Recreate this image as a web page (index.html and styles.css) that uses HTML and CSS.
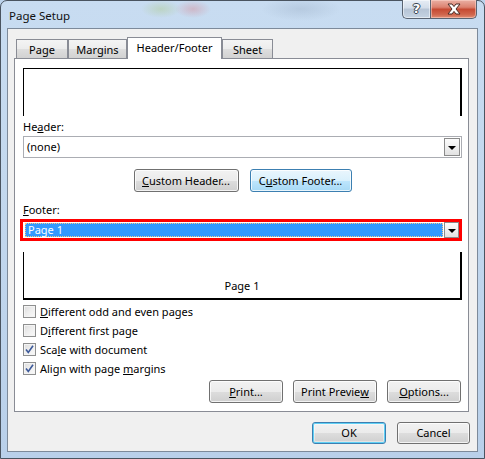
FILE: index.html
```html
<!DOCTYPE html>
<html>
<head>
<meta charset="utf-8">
<title>Page Setup</title>
<link rel="stylesheet" href="styles.css">
</head>
<body>
<div class="window">
  <div class="titlebar">
    <span class="title">Page Setup</span>
    <div class="caption">
      <div class="cbtn help"><span>?</span></div>
      <div class="cbtn close">
        <svg width="16" height="12" viewBox="0 0 16 12">
          <path d="M2 1 L6 1 L8 3.6 L10 1 L14 1 L10 6 L14 11 L10 11 L8 8.4 L6 11 L2 11 L6 6 Z" fill="#fff" stroke="#4a2a24" stroke-width="1" stroke-linejoin="round"/>
        </svg>
      </div>
    </div>
  </div>
  <div class="client">
    <div class="tabs">
      <div class="tab w-page">Page</div>
      <div class="tab w-margins">Margins</div>
      <div class="tab active w-hf">Header/Footer</div>
      <div class="tab w-sheet">Sheet</div>
    </div>
    <div class="panel">
      <div class="preview head-preview"></div>
      <div class="field-label">He<u>a</u>der:</div>
      <div class="combo">
        <span class="combo-text">(none)</span>
        <span class="drop"><span class="tri"></span></span>
      </div>
      <div class="custom-row">
        <div class="btn w-ch"><u>C</u>ustom Header...</div>
        <div class="btn hover w-cf">C<u>u</u>stom Footer...</div>
      </div>
      <div class="field-label foot-label"><u>F</u>ooter:</div>
      <div class="red-frame">
        <div class="sel-field">Page 1</div>
        <span class="drop drop-small"><span class="tri"></span></span>
      </div>
      <div class="preview foot-preview"><span>Page 1</span></div>
      <div class="checks">
        <div class="check-row"><span class="box"></span><span class="lbl"><u>D</u>ifferent odd and even pages</span></div>
        <div class="check-row"><span class="box"></span><span class="lbl">D<u>i</u>fferent first page</span></div>
        <div class="check-row"><span class="box"><svg width="11" height="11" viewBox="0 0 11 11"><path d="M2 5.5 L4.3 8.5 L9 1.8" fill="none" stroke="#3d5a9a" stroke-width="1.6"/></svg></span><span class="lbl">Sca<u>l</u>e with document</span></div>
        <div class="check-row"><span class="box"><svg width="11" height="11" viewBox="0 0 11 11"><path d="M2 5.5 L4.3 8.5 L9 1.8" fill="none" stroke="#3d5a9a" stroke-width="1.6"/></svg></span><span class="lbl">Align with page <u>m</u>argins</span></div>
      </div>
      <div class="btn-row">
        <div class="btn w-print"><u>P</u>rint...</div>
        <div class="btn w-preview">Print Previe<u>w</u></div>
        <div class="btn w-options"><u>O</u>ptions...</div>
      </div>
    </div>
    <div class="dialog-btns">
      <div class="btn focus w-ok">OK</div>
      <div class="btn w-cancel">Cancel</div>
    </div>
  </div>
</div>
</body>
</html>
```

FILE: styles.css
```css
* { box-sizing: border-box; }
html, body { margin: 0; padding: 0; }
body {
  width: 485px;
  height: 459px;
  overflow: hidden;
  font-family: "Noto Sans", "Open Sans", sans-serif;
  font-size: 11px;
  color: #000;
  background: #bcd3ec;
}
u { text-decoration: underline; text-underline-offset: 1px; }

.window {
  width: 485px;
  height: 459px;
  border: 1px solid #4a5460;
  border-radius: 7px 7px 0 0;
  display: flex;
  flex-direction: column;
  background:
    radial-gradient(ellipse 20px 9px at 160px 8px, rgba(170,200,130,0.4), transparent),
    radial-gradient(ellipse 18px 9px at 192px 8px, rgba(215,130,140,0.4), transparent),
    radial-gradient(ellipse 40px 12px at 300px 8px, rgba(130,150,175,0.25), transparent),
    linear-gradient(180deg, #c8dcf1 0%, #c3d8ee 40%, #b9d0ea 100%);
}

.titlebar {
  height: 27px;
  display: flex;
  align-items: flex-start;
  padding-left: 8px;
}
.title {
  padding-top: 7px;
  line-height: 16px;
  font-size: 11.5px;
  color: #111;
}
.caption {
  margin-left: auto;
  margin-right: 7px;
  margin-top: -1px;
  display: flex;
}
.cbtn {
  height: 19px;
  display: flex;
  align-items: center;
  justify-content: center;
  border: 1px solid #5a6472;
  border-top: none;
}
.help {
  width: 28px;
  border-right: none;
  border-radius: 0 0 0 5px;
  background: linear-gradient(180deg, #e6edf5 0%, #d3dde9 45%, #b6c4d5 50%, #c5d3e3 100%);
  box-shadow: inset 0 0 0 1px rgba(255,255,255,0.5);
}
.help span {
  font-family: "DejaVu Sans", sans-serif;
  font-weight: bold;
  font-size: 13px;
  color: #fff;
  line-height: 14px;
  text-shadow: 0 0 1px #3a4350, 1px 0 0 #3a4350, -1px 0 0 #3a4350, 0 1px 0 #3a4350, 0 -1px 0 #3a4350;
}
.close {
  width: 47px;
  border-radius: 0 0 5px 0;
  background: linear-gradient(180deg, #eab0a4 0%, #dc8270 40%, #c64a33 52%, #d0654c 80%, #e08d74 100%);
  box-shadow: inset 0 0 0 1px rgba(255,220,210,0.5);
}

.client {
  flex: 1;
  margin: 0 6px 6px 6px;
  border: 1px solid #7d8a9a;
  background: #f0f0f0;
  padding: 8px 8px 0 6px;
  display: flex;
  flex-direction: column;
}

.tabs {
  display: flex;
  align-items: flex-end;
  height: 21px;
  margin-left: 2px;
  position: relative;
  z-index: 1;
}
.tab {
  height: 19px;
  border: 1px solid #898c95;
  border-bottom: none;
  background: linear-gradient(180deg, #f4f4f4 0%, #ececec 50%, #dedede 52%, #d2d2d2 100%);
  display: flex;
  align-items: center;
  justify-content: center;
  padding-top: 2px;
  line-height: 16px;
}
.tab.active {
  height: 22px;
  margin-bottom: -1px;
  background: #fff;
  padding-top: 0;
  padding-bottom: 1px;
}
.w-page { width: 52px; }
.w-margins { width: 59px; }
.w-hf { width: 95px; }
.w-sheet { width: 51px; }

.panel {
  height: 354px;
  border: 1px solid #898c95;
  background: #fff;
  padding: 9px 6px 0 8px;
  display: flex;
  flex-direction: column;
}

.preview {
  height: 48px;
  border-left: 1px solid #000;
  border-right: 2px solid #000;
}
.head-preview { border-top: 1px solid #000; }
.foot-preview {
  margin-top: 11px;
  border-bottom: 2px solid #000;
  display: flex;
  align-items: flex-end;
  justify-content: center;
  padding-bottom: 4px;
  line-height: 16px;
}

.field-label {
  margin-top: 3px;
  line-height: 16px;
}
.foot-label { margin-top: 10px; }

.combo {
  margin-top: 1px;
  height: 22px;
  border: 1px solid #abadb3;
  display: flex;
  align-items: center;
  padding-left: 3px;
}
.combo-text { line-height: 16px; }
.drop {
  margin-left: auto;
  margin-right: 1px;
  width: 16px;
  height: 18px;
  border: 1px solid #8b8b8b;
  background: linear-gradient(180deg, #fcfcfc 0%, #f0f0f0 50%, #e2e2e2 100%);
  display: flex;
  align-items: center;
  justify-content: center;
}
.tri {
  width: 0;
  height: 0;
  border-left: 4px solid transparent;
  border-right: 4px solid transparent;
  border-top: 4px solid #000;
  margin-top: 1px;
}
.drop-small {
  width: 15px;
  height: 16px;
  margin-right: 0;
  margin-left: 0;
}

.custom-row {
  margin-top: 11px;
  display: flex;
  justify-content: center;
  gap: 11px;
}

.btn {
  height: 23px;
  border: 1px solid #707070;
  border-radius: 3px;
  background: linear-gradient(180deg, #f2f2f2 0%, #ebebeb 50%, #dddddd 51%, #cfcfcf 100%);
  box-shadow: inset 0 0 0 1px rgba(255,255,255,0.75);
  display: flex;
  align-items: center;
  justify-content: center;
  line-height: 16px;
}
.btn.hover {
  border-color: #3c7fb1;
  background: linear-gradient(180deg, #eaf6fd 0%, #d9f0fc 50%, #bee6fd 51%, #a7d9f5 100%);
}
.btn.focus {
  border-color: #3c7fb1;
  box-shadow: inset 0 0 0 1px #5fd0f5, inset 0 0 0 2px rgba(255,255,255,0.4);
}
.w-ch { width: 105px; }
.w-cf { width: 102px; }

.red-frame {
  margin-top: 1px;
  margin-left: -3px;
  height: 22px;
  border: 3px solid #f00;
  display: flex;
  background: #fff;
}
.sel-field {
  flex: 1;
  margin: 1px 1px 1px 2px;
  background: #3399ff;
  border: 1px dotted #f3c98c;
  color: #fff;
  padding-left: 2px;
  line-height: 12px;
  display: flex;
  align-items: center;
}

.checks {
  margin-top: 2px;
  display: flex;
  flex-direction: column;
}
.check-row {
  height: 19px;
  display: flex;
  align-items: center;
}
.box {
  width: 13px;
  height: 13px;
  border: 1px solid #8e8f8f;
  background: linear-gradient(135deg, #dcdcdc 0%, #eeeeee 50%, #fafafa 100%);
  box-shadow: inset 0 0 0 1px #f4f4f4;
  display: flex;
  align-items: center;
  justify-content: center;
}
.lbl {
  margin-left: 4px;
  line-height: 16px;
}

.btn-row {
  margin-top: 2px;
  display: flex;
  justify-content: flex-end;
  gap: 10px;
  margin-right: 1px;
}
.w-print { width: 74px; }
.w-preview { width: 84px; }
.w-options { width: 74px; }

.dialog-btns {
  margin-top: 10px;
  display: flex;
  justify-content: flex-end;
  gap: 11px;
  margin-right: -1px;
}
.dialog-btns .btn { height: 22px; }
.w-ok { width: 74px; }
.w-cancel { width: 73px; }
```
